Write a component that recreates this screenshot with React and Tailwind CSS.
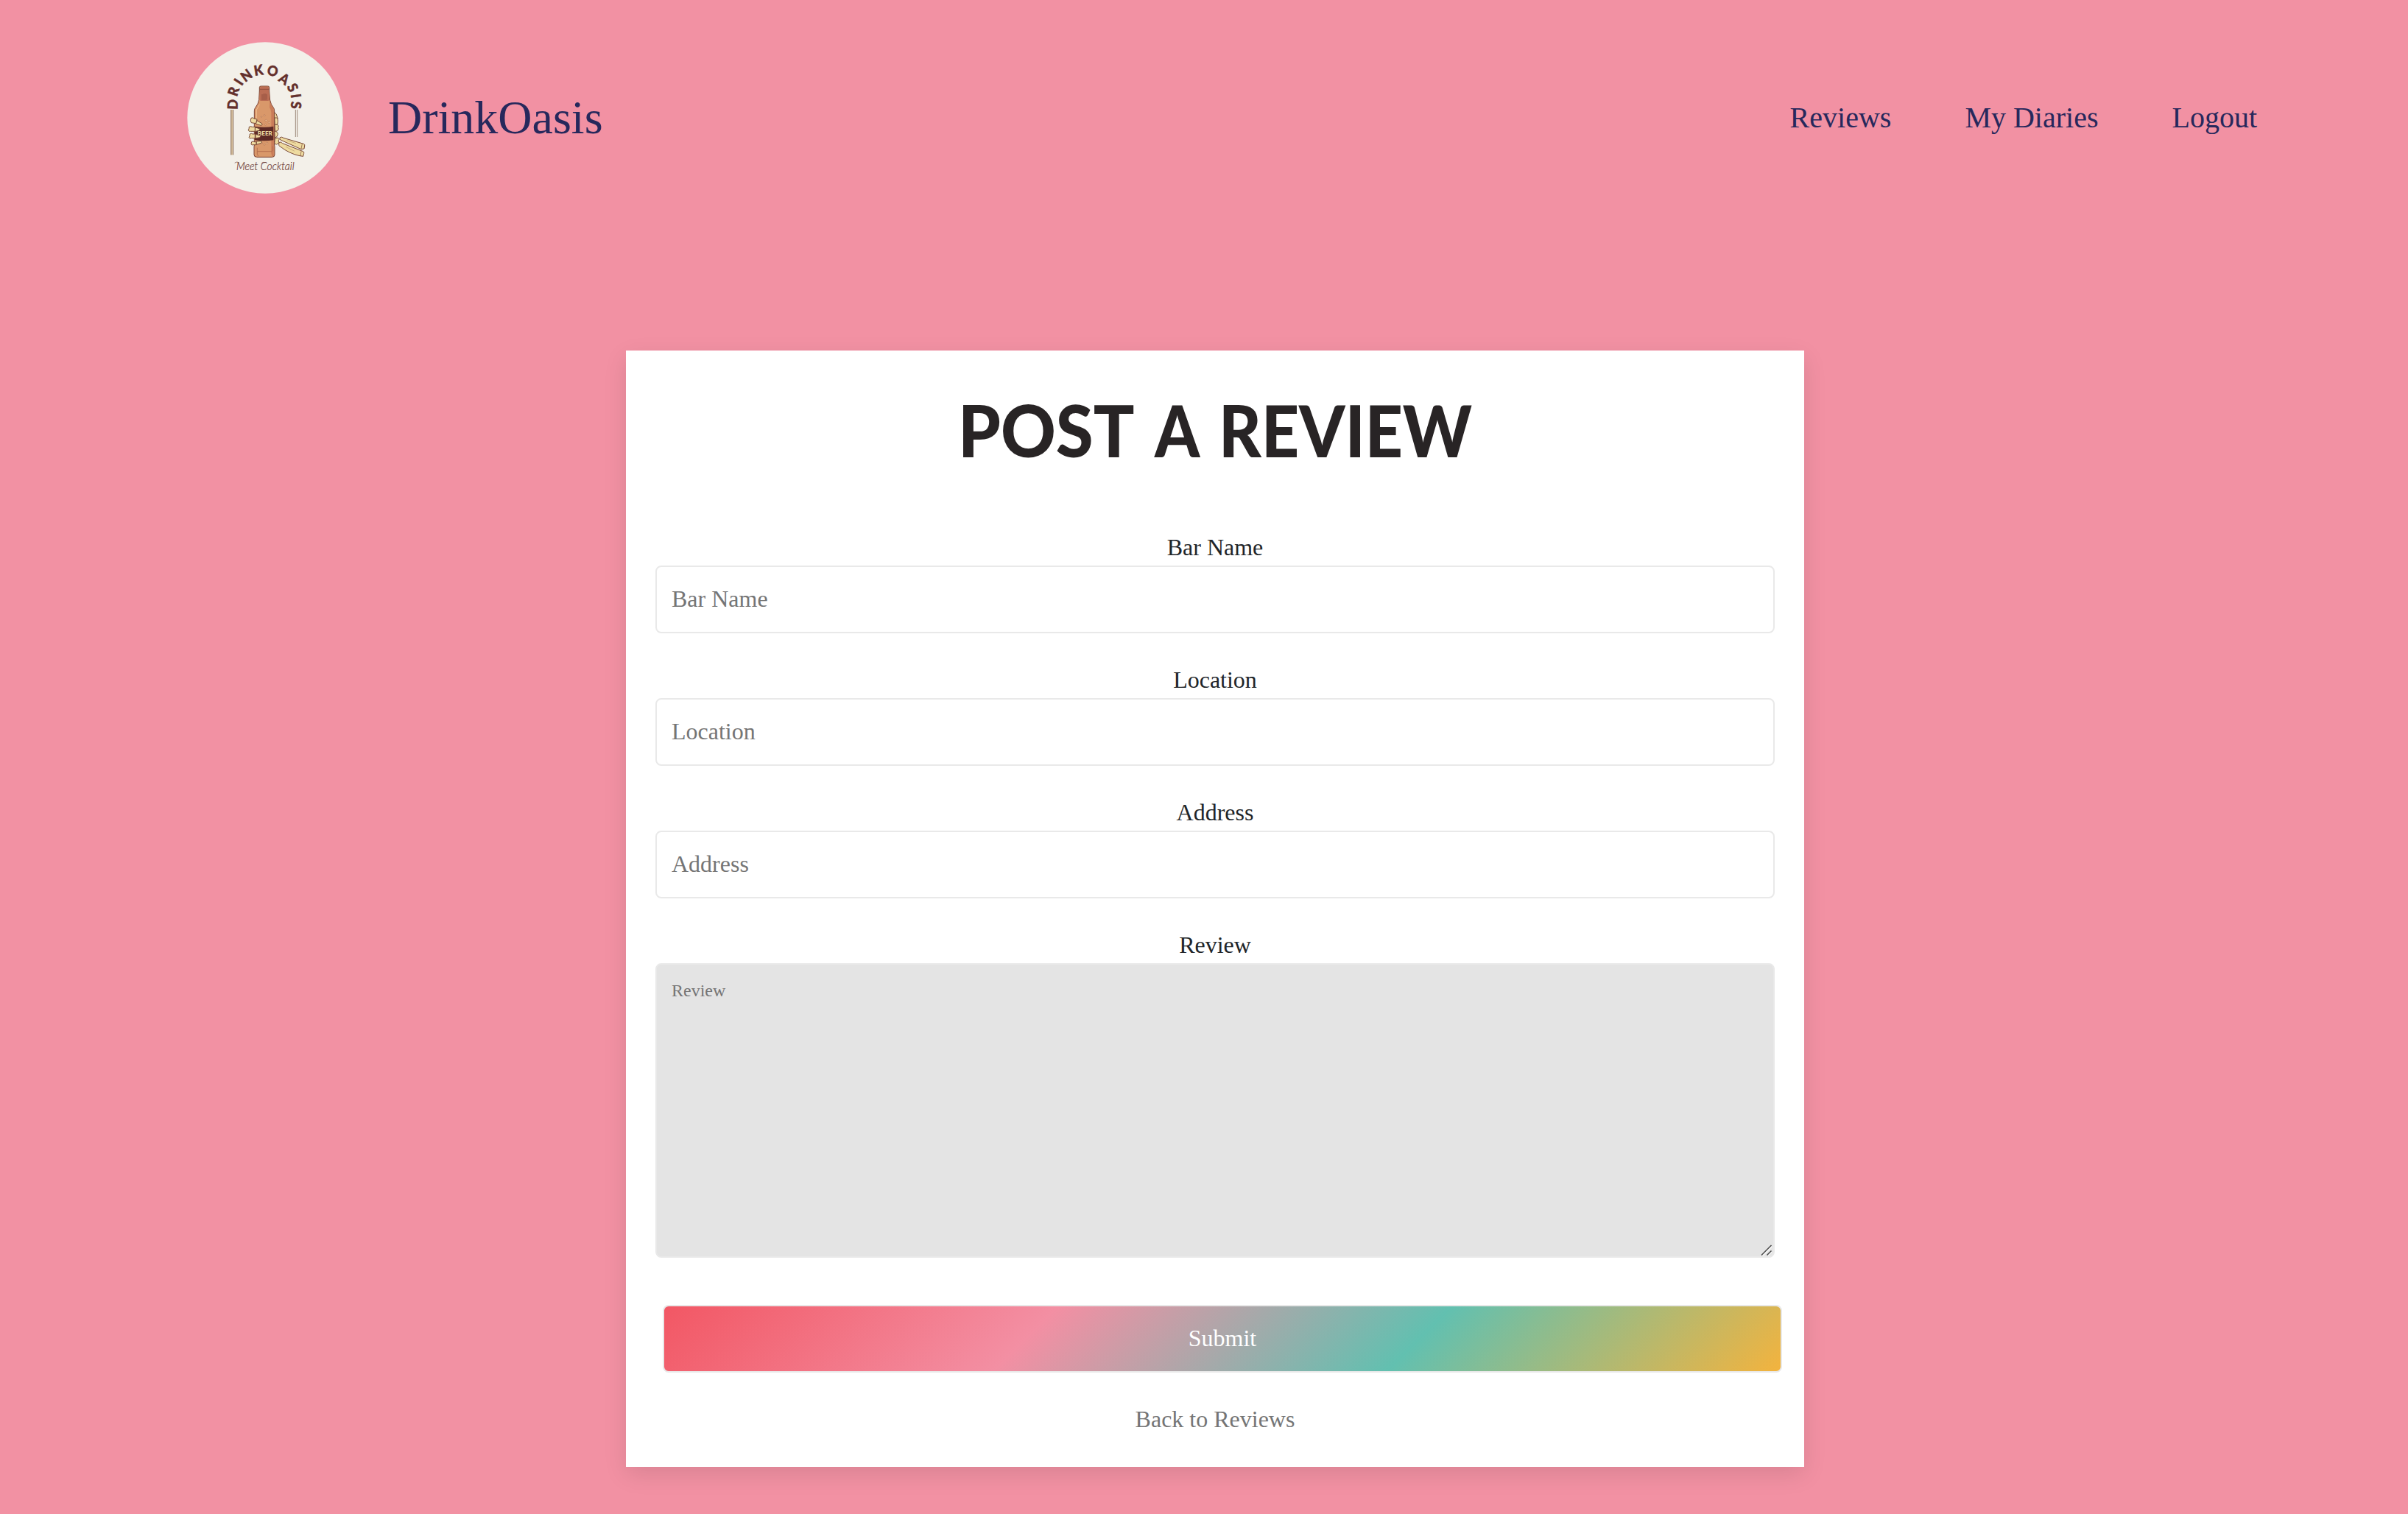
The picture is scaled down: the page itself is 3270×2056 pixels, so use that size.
const BADGE_LETTERS = [
  { ch: 'D', x: 228, y: 305, a: -88 },
  { ch: 'R', x: 231, y: 252, a: -72 },
  { ch: 'I', x: 252, y: 214, a: -57 },
  { ch: 'N', x: 284, y: 187, a: -36 },
  { ch: 'K', x: 333, y: 166, a: -9 },
  { ch: 'O', x: 391, y: 169, a: 13 },
  { ch: 'A', x: 438, y: 201, a: 34 },
  { ch: 'S', x: 473, y: 237, a: 64 },
  { ch: 'I', x: 486, y: 271, a: 82 },
  { ch: 'S', x: 486, y: 308, a: 93 },
];

const FIELDS = ['Bar Name', 'Location', 'Address'];
const NAV = ['Reviews', 'My Diaries', 'Logout'];

function Logo() {
  return (
    <svg viewBox="42 51 636 618" className="h-[206px] w-[212px] shrink-0" aria-label="DrinkOasis logo">
      <ellipse cx="360" cy="360" rx="317" ry="308" fill="#f3f0e9" />
      <g
        fill="#632f2b" stroke="#632f2b" strokeWidth="1.500"
        fontFamily="Lato, sans-serif" fontWeight="900" fontSize="57" textAnchor="middle"
      >
        {BADGE_LETTERS.map((l, i) => (
          <text key={i} transform={`translate(${l.x} ${l.y}) rotate(${l.a}) scale(0.94 1)`} y="20.500">
            {l.ch}
          </text>
        ))}
      </g>

      {/* side rules */}
      <path d="M225.500 327V511" stroke="#e6d3ae" strokeWidth="8" />
      <path d="M221.500 327V511M229.500 327V511" stroke="#7a5a48" strokeWidth="3" />
      <path d="M484 327V438M491 327V438" stroke="#8c7263" strokeWidth="2.500" />

      {/* knuckles and forearm behind the bottle */}
      <g fill="#eedba0" stroke="#7a4a38" strokeWidth="3" strokeLinejoin="round">
        <path d="M396 336q12 6 14 22l2 4-10 8-6-4z" />
        <path d="M398 360l12 0q4 12 1 26l-11 3z" />
        <path d="M399 388q14-3 16 5-5 6 0 12-2 11-14 10z" />
        <path d="M398 415q14 0 14 12-2 12-12 15z" />
        <path d="M400 444l12-3 6 6-4 6 3 9-10 6-9-2z" />
        <path d="M421 440q7-4 14 2l82 24q6 2 4 8l-2 12-12 2-84-38q-6-4-2-10z" />
        <path d="M417 460q8-3 14 4l84 33q5 2 3 8l-3 12-14-2q-44-10-78-37-10-3-6-18z" />
        <path d="M511 466l-4 20M507 496l-3 20" fill="none" strokeWidth="2" />
        <path d="M448 452l38 12M444 478l36 18" fill="none" strokeWidth="2" stroke="#b79a6c" />
      </g>

      {/* bottle */}
      <path
        d="M337 236q0-5 6-5h28q6 0 6 5v14l3 38q3 18 15 32 3 4 3 12v120q-3 12 1 26v32q0 10-10 10h-63q-11 0-11-10v-32q4-14 1-26v-120q0-8 4-13 12-14 15-32l2-38z"
        fill="#d9986a"
        stroke="#7a4034"
        strokeWidth="3"
      />
      <path d="M339 237q0-4 6-4h24q6 0 6 4v14l3 36q-4 5-10 4h-20q-7 1-11-4l2-36z" fill="#bb6d54" />
      <path d="M339 244h37M348 264v24M354 262v26M360 261v27M366 263v24" stroke="#8d4a3b" strokeWidth="2.500" />
      <path d="M379 292q5 18 15 30 2 4 2 12v158q-3 14 0 24h-8q-5-10-3-24V338q0-10-7-20z" fill="#c97c59" />
      <path d="M337 305q-5 12-12 22v50" fill="none" stroke="#f0bd92" strokeWidth="3" />
      <path d="M328 482v26q0 6 6 6M328 497h58q4 0 4-7v-14" fill="none" stroke="#b0694b" strokeWidth="2.500" />
      <g fill="#f0bd92" stroke="#a4684a" strokeWidth="1.500">
        <circle cx="357" cy="350" r="3" />
        <circle cx="345" cy="356" r="2.500" />
        <circle cx="364" cy="371" r="4" />
        <circle cx="376" cy="379" r="3.500" />
        <circle cx="361" cy="388" r="3" />
        <circle cx="368" cy="463" r="3.500" />
        <circle cx="357" cy="469" r="3" />
        <circle cx="347" cy="463" r="2.500" />
      </g>
      <path d="M318 395q38 6 76 0v56q-38 6-76 0z" fill="#5d2a25" />
      <text
        x="329" y="431" fontFamily="Lato, sans-serif" fontWeight="900" fontSize="23"
        textLength="61" lengthAdjust="spacingAndGlyphs" fill="#eedba0"
      >
        BEER
      </text>

      {/* fingers in front */}
      <g fill="#eedba0" stroke="#7a4a38" strokeWidth="3" strokeLinejoin="round">
        <path d="M303 361q8-4 12 2l12 3-4 17-19-3q-6-7-1-19z" />
        <path d="M327 371l21 13q2 5-4 7l-22-6z" />
        <path d="M295 397q6-4 12 0h12v18h-18q-8 2-9-5 3-6 3-13z" />
        <path d="M320 399l17 5q4 4-1 7l-17 5z" />
        <path d="M298 426q7-4 11 0h10v17h-14q-8 3-11-3 4-7 4-14z" />
        <path d="M321 427l18 5q4 5-1 8l-17 3z" />
        <path d="M305 458q6-3 10 0h9v12h-13q-6 3-8-3z" />
        <path d="M325 456l20-1q4 4-1 8l-19 6z" />
      </g>

      <text
        x="243" y="573" fontFamily="Lato, sans-serif" fontStyle="italic" fontWeight="300" fontSize="46"
        textLength="236" lengthAdjust="spacingAndGlyphs" fill="#632f2b" stroke="#632f2b" strokeWidth="0.500"
      >
        Meet Cocktail
      </text>
      <path d="M237 543q8-6 16-1M345 545q5-7 14-3" fill="none" stroke="#70403a" strokeWidth="2" strokeLinecap="round" />
    </svg>
  );
}

function Label({ children }) {
  return <label className="block h-[48px] text-center text-[32px] leading-[46px] text-[#212529]">{children}</label>;
}

export default function App() {
  return (
    <div className="h-[2056px] w-[3270px] overflow-hidden bg-[#f291a3] font-['Liberation_Serif','Times_New_Roman',serif]">
      <header className="flex h-[320px] items-center justify-between pr-[205px] pl-[254px]">
        <div className="flex items-center gap-[61px]">
          <Logo />
          <span className="text-[64px] leading-[96px] text-[#27285c]">DrinkOasis</span>
        </div>
        <nav className="flex gap-[100px] text-[40px] leading-[60px] text-[#27285c]">
          {NAV.map((item) => (
            <a key={item}>{item}</a>
          ))}
        </nav>
      </header>

      <main className="mt-[156px] ml-[850px] h-[1516px] w-[1600px] bg-white px-[40px] pt-[60px] shadow-[0_10px_30px_rgba(0,0,0,0.1)]">
        <h1 className="flex h-[96px] pl-[411px] font-['Lato',sans-serif] text-[97px] leading-[96px] font-black text-[#282425]">
          <span className="w-[267px] origin-left scale-x-[0.952]">POST</span>
          <span className="w-[87px] origin-left scale-x-[0.9]">A</span>
          <span className="origin-left scale-x-[0.919]">REVIEW</span>
        </h1>

        <form className="mt-[88px] flex flex-col">
          {FIELDS.map((name) => (
            <div key={name} className="mb-[40px]">
              <Label>{name}</Label>
              <input
                placeholder={name}
                className="block h-[92px] w-full rounded-[8px] border-2 border-[#e9e9e9] bg-white px-[20px] pb-[2px] text-[32px] placeholder:text-[#757575]"
              />
            </div>
          ))}

          <Label>Review</Label>
          <div className="relative h-[400px]">
            <textarea
              placeholder="Review"
              className="block h-[400px] w-full resize-none rounded-[8px] border-2 border-[#e9e9e9] bg-[#e4e4e4] px-[20px] pt-[21px] text-[24px] leading-[28px] placeholder:text-[#757575]"
            />
            <svg viewBox="0 0 16 16" className="absolute right-[3px] bottom-[2px] h-[16px] w-[16px]" fill="none">
              <path d="M3 15L15 3M10 15L15 10" stroke="#f8f8f8" strokeWidth="1.500" />
              <path d="M1 14.500L14.500 1M8.500 14.500L14.500 8.500" stroke="#4a4a4a" strokeWidth="1.500" />
            </svg>
          </div>

          <button
            type="button"
            className="mt-[64px] ml-[10px] h-[92px] w-[1520px] rounded-[8px] border-2 border-[#e9e9e9] bg-[linear-gradient(135deg,#f25764,#f38fa3,#62c0b0,#f3b33e)] pb-[2px] text-[32px] text-white"
          >
            Submit
          </button>
        </form>

        <a className="mt-[39px] block text-center text-[32px] leading-[48px] text-[#757575]">Back to Reviews</a>
      </main>
    </div>
  );
}
